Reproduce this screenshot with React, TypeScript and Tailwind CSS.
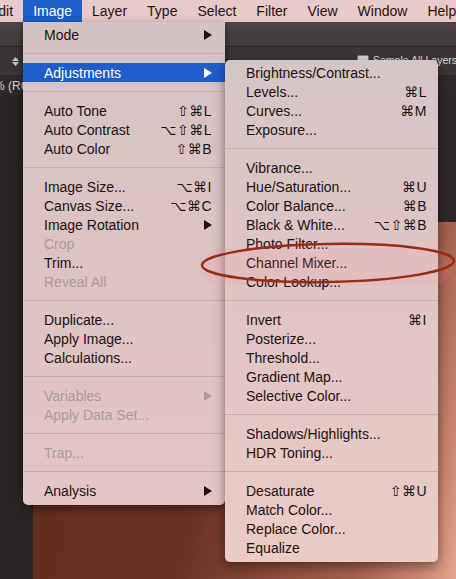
import React from "react";

type Row =
  | { sep: true }
  | { label: string; sc?: string; arrow?: boolean; disabled?: boolean; hl?: boolean };

const S: Row = { sep: true };

const leftItems: Row[] = [
  { label: "Mode", arrow: true },
  S,
  { label: "Adjustments", arrow: true, hl: true },
  S,
  { label: "Auto Tone", sc: "⇧⌘L" },
  { label: "Auto Contrast", sc: "⌥⇧⌘L" },
  { label: "Auto Color", sc: "⇧⌘B" },
  S,
  { label: "Image Size...", sc: "⌥⌘I" },
  { label: "Canvas Size...", sc: "⌥⌘C" },
  { label: "Image Rotation", arrow: true },
  { label: "Crop", disabled: true },
  { label: "Trim..." },
  { label: "Reveal All", disabled: true },
  S,
  { label: "Duplicate..." },
  { label: "Apply Image..." },
  { label: "Calculations..." },
  S,
  { label: "Variables", arrow: true, disabled: true },
  { label: "Apply Data Set...", disabled: true },
  S,
  { label: "Trap...", disabled: true },
  S,
  { label: "Analysis", arrow: true },
];

const subItems: Row[] = [
  { label: "Brightness/Contrast..." },
  { label: "Levels...", sc: "⌘L" },
  { label: "Curves...", sc: "⌘M" },
  { label: "Exposure..." },
  S,
  { label: "Vibrance..." },
  { label: "Hue/Saturation...", sc: "⌘U" },
  { label: "Color Balance...", sc: "⌘B" },
  { label: "Black & White...", sc: "⌥⇧⌘B" },
  { label: "Photo Filter..." },
  { label: "Channel Mixer..." },
  { label: "Color Lookup..." },
  S,
  { label: "Invert", sc: "⌘I" },
  { label: "Posterize..." },
  { label: "Threshold..." },
  { label: "Gradient Map..." },
  { label: "Selective Color..." },
  S,
  { label: "Shadows/Highlights..." },
  { label: "HDR Toning..." },
  S,
  { label: "Desaturate", sc: "⇧⌘U" },
  { label: "Match Color..." },
  { label: "Replace Color..." },
  { label: "Equalize" },
];

function Arrow({ color }: { color: string }) {
  return (
    <svg width="8" height="10" viewBox="0 0 8 10" className="shrink-0">
      <polygon points="0,0 8,5 0,10" fill={color} />
    </svg>
  );
}

function MenuRows({ rows, pr }: { rows: Row[]; pr: string }) {
  return (
    <>
      {rows.map((r, i) => {
        if ("sep" in r) {
          return (
            <div key={i} className="h-[19px] flex items-center">
              <div className="h-px w-full bg-[#c4afae]" />
            </div>
          );
        }
        const color = r.hl ? "text-white" : r.disabled ? "text-[#a99a9a]" : "text-[#1d1212]";
        const arrowColor = r.hl ? "#ffffff" : r.disabled ? "#a99a9a" : "#1d1212";
        return (
          <div
            key={i}
            className={`h-[19px] flex items-center justify-between pl-[21px] ${pr} ${color} ${
              r.hl ? "bg-[#1f5dcb]" : ""
            }`}
          >
            <span className="text-[14px] leading-none whitespace-nowrap">{r.label}</span>
            {r.sc && (
              <span className="text-[14px] leading-none whitespace-nowrap tracking-[0.5px]">{r.sc}</span>
            )}
            {r.arrow && <Arrow color={arrowColor} />}
          </div>
        );
      })}
    </>
  );
}

export default function App() {
  const bar = ["Edit", "Image", "Layer", "Type", "Select", "Filter", "View", "Window", "Help"];
  return (
    <div
      className="relative w-[456px] h-[579px] overflow-hidden bg-[#2a2626] flex flex-col"
      style={{ fontFamily: '"Liberation Sans", "DejaVu Sans", Arial, sans-serif' }}
    >
      {/* menu bar */}
      <div className="h-[22px] shrink-0 bg-[#e9caca] flex items-stretch overflow-hidden">
        <div className="flex ml-[-21px]">
          {bar.map((b) => (
            <div
              key={b}
              className={`px-[10px] flex items-center text-[14px] leading-none whitespace-nowrap ${
                b === "Image" ? "bg-[#1f5dcb] text-white" : "text-[#1d1212]"
              }`}
            >
              {b}
            </div>
          ))}
        </div>
      </div>
      {/* app bar */}
      <div className="h-[25px] shrink-0 bg-[linear-gradient(#4b4545,#413b3b)] border-b border-[#2c2727]" />
      {/* options bar */}
      <div className="h-[29px] shrink-0 bg-[#3b3535] flex items-center overflow-hidden border-b border-[#2c2727]">
        <div className="ml-[12px] flex flex-col items-center gap-[1px] shrink-0">
          <svg width="7" height="4" viewBox="0 0 7 4"><polygon points="0,4 3.5,0 7,4" fill="#cfc6c6" /></svg>
          <svg width="7" height="4" viewBox="0 0 7 4"><polygon points="0,0 3.5,4 7,0" fill="#cfc6c6" /></svg>
        </div>
        <div className="ml-[338px] flex items-center gap-[4px] shrink-0 text-[10.5px] text-[#e0d8d8]">
          <div className="w-[12px] h-[12px] rounded-[2px] bg-[#d8d0d0] border border-[#777] shrink-0" />
          <span className="whitespace-nowrap">Sample All Layers</span>
        </div>
      </div>
      {/* doc tab row */}
      <div className="h-[19px] shrink-0 flex items-center bg-[#2f2a2a] overflow-hidden">
        <span className="ml-[-6px] text-[12px] leading-none text-[#d6cccc] whitespace-nowrap">% (RGB/8)</span>
      </div>
      {/* work area */}
      <div className="flex flex-1">
        <div className="w-[33px] bg-[#282424]" />
        <div className="flex-1 flex flex-col">
          <div className="h-[127px] bg-[#2b2727] border-b border-[#4a1f1c]" />
          <div className="flex-1 bg-[linear-gradient(105deg,#5e2c1c_0%,#673222_45%,#a45f4f_80%,#c98370_92%,#e3a68c_100%)]" />
        </div>
      </div>

      {/* Image menu */}
      <div className="absolute left-[23px] top-[22px] w-[202px] pt-[3px] pb-[5px] rounded-b-[5px] bg-[linear-gradient(#d4c3c3,#dcc3c2_50%,#e4c6c4)] shadow-[0_3px_10px_rgba(0,0,0,0.45)]">
        <MenuRows rows={leftItems} pr="pr-[13px]" />
      </div>

      {/* Adjustments submenu */}
      <div className="absolute left-[225px] top-[60px] w-[213px] pt-[3px] pb-[5px] rounded-[5px] bg-[linear-gradient(#d5c5c5,#e0c5c3_50%,#ebcbc6)] shadow-[0_4px_12px_rgba(0,0,0,0.45)]">
        <MenuRows rows={subItems} pr="pr-[11px]" />
      </div>

      {/* annotation highlight and ellipse */}
      <div className="absolute left-[202px] top-[248px] w-[250px] h-[37px] rounded-[18px] bg-[rgba(255,130,160,0.12)] pointer-events-none" />
      <svg className="absolute left-0 top-0 pointer-events-none" width="456" height="579">
        <ellipse
          cx="328"
          cy="263"
          rx="126"
          ry="19"
          fill="none"
          stroke="#9a2b14"
          strokeWidth="2.5"
          transform="rotate(-1 328 263)"
        />
      </svg>
    </div>
  );
}
